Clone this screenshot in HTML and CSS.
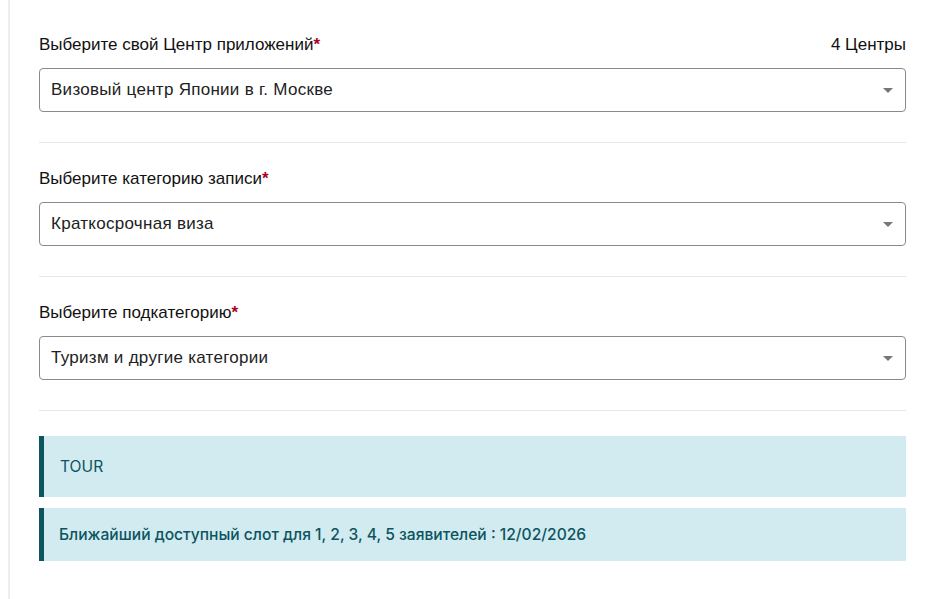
FILE: index.html
```html
<!DOCTYPE html>
<html lang="ru">
<head>
<meta charset="utf-8">
<link rel="stylesheet" href="styles.css">
</head>
<body>
<div class="page">
  <div class="content">
    <div class="field">
      <div class="label-row">
        <label class="label">Выберите свой Центр приложений<span class="req">*</span></label>
        <span class="count">4 Центры</span>
      </div>
      <div class="select"><span>Визовый центр Японии в г. Москве</span><span class="caret"></span></div>
    </div>
    <hr class="divider">
    <div class="field">
      <div class="label-row">
        <label class="label">Выберите категорию записи<span class="req">*</span></label>
      </div>
      <div class="select"><span>Краткосрочная виза</span><span class="caret"></span></div>
    </div>
    <hr class="divider">
    <div class="field">
      <div class="label-row">
        <label class="label">Выберите подкатегорию<span class="req">*</span></label>
      </div>
      <div class="select"><span>Туризм и другие категории</span><span class="caret"></span></div>
    </div>
    <hr class="divider divider-last">
    <div class="alert alert-tall">TOUR</div>
    <div class="alert">Ближайший доступный слот для 1, 2, 3, 4, 5 заявителей : 12/02/2026</div>
  </div>
</div>
</body>
</html>
```
FILE: styles.css
```css
html, body {
  margin: 0;
  padding: 0;
  background: #ffffff;
}
.page {
  margin-left: 8px;
  border-left: 2px solid #eceef3;
  min-height: 599px;
  box-sizing: border-box;
  padding: 0 29px 0 29px;
}
.content {
  padding-top: 34px;
  width: 867px;
}
.field {
  display: flex;
  flex-direction: column;
}
.label-row {
  display: flex;
  justify-content: space-between;
  align-items: center;
  height: 22px;
  margin-bottom: 12px;
}
.label, .count {
  font-family: "Liberation Sans", Arial, sans-serif;
  font-size: 17px;
  color: #111111;
}
.req {
  color: #b00020;
  font-weight: bold;
}
.select {
  height: 44px;
  box-sizing: border-box;
  border: 1px solid #8a8a8a;
  border-radius: 4px;
  display: flex;
  align-items: center;
  justify-content: space-between;
  padding: 0 12px 0 11px;
  font-family: "Liberation Sans", Arial, sans-serif;
  font-size: 17px;
  color: #222222;
  letter-spacing: 0.28px;
}
.caret {
  width: 0;
  height: 0;
  border-left: 5px solid transparent;
  border-right: 5px solid transparent;
  border-top: 5px solid #777777;
  margin-top: 1px;
}
.divider {
  border: none;
  border-top: 1px solid #e6e6e9;
  margin: 30px 0 25px 0;
}
.divider-last {
  margin-bottom: 25px;
}
.alert {
  background: #d1ebf0;
  border-left: 5px solid #0c5460;
  color: #0c5460;
  font-family: Inter, "Noto Sans", sans-serif;
  font-size: 15.6px;
  font-weight: 500;
  height: 53px;
  box-sizing: border-box;
  display: flex;
  align-items: center;
  padding-left: 15px;
  margin-bottom: 11px;
}
.alert-tall {
  height: 61px;
  padding-left: 16px;
  font-weight: 400;
}
```
